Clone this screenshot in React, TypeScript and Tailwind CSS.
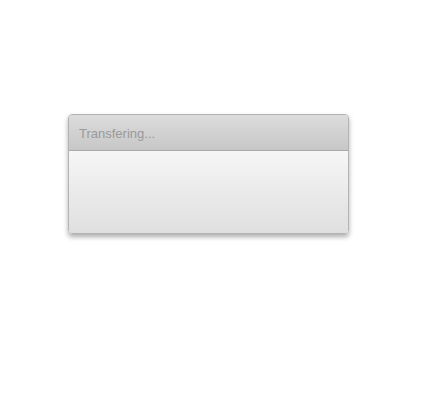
export default function App() {
  return (
    <div className="min-h-[399px] w-full bg-white pt-[114px] pl-[68px]" style={{ fontFamily: '"Liberation Sans", Arial, sans-serif' }}>
      <div className="flex h-[120px] w-[281px] flex-col overflow-hidden rounded-[4px] border border-[#b3b3b3] shadow-[0_3px_5px_rgba(0,0,0,0.32)]">
        <div className="flex h-[36px] shrink-0 items-center border-b border-[#a9a9a9] bg-gradient-to-b from-[#dcdcdc] to-[#c7c7c7] pl-[10px] pt-[2px] text-[13px] text-[#999999]">
          Transfering...
        </div>
        <div className="flex-1 bg-gradient-to-b from-[#f6f6f6] to-[#dfdfdf]" />
      </div>
    </div>
  );
}
